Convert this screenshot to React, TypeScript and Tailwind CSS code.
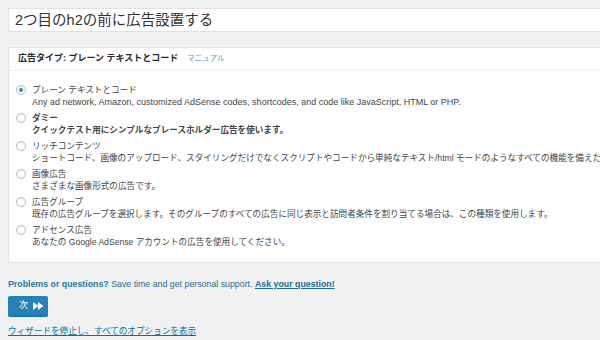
import React from "react";

const adTypes = [
  {
    label: "プレーン テキストとコード",
    desc: "Any ad network, Amazon, customized AdSense codes, shortcodes, and code like JavaScript, HTML or PHP.",
    checked: true,
    latin: true,
  },
  {
    label: "ダミー",
    desc: "クイックテスト用にシンプルなプレースホルダー広告を使います。",
    bold: true,
  },
  {
    label: "リッチコンテンツ",
    desc: "ショートコード、画像のアップロード、スタイリングだけでなくスクリプトやコードから単純なテキスト/html モードのようなすべての機能を備えたエディタ",
  },
  { label: "画像広告", desc: "さまざまな画像形式の広告です。" },
  {
    label: "広告グループ",
    desc: "既存の広告グループを選択します。そのグループのすべての広告に同じ表示と訪問者条件を割り当てる場合は、この種類を使用します。",
  },
  { label: "アドセンス広告", desc: "あなたの Google AdSense アカウントの広告を使用してください。" },
];

function Radio({ checked }: { checked?: boolean }) {
  return (
    <span className="flex items-center justify-center w-[10px] h-[10px] rounded-full border border-[#b4b9be] bg-white shadow-[inset_0_1px_1px_rgba(0,0,0,0.08)]">
      {checked && <span className="w-[4px] h-[4px] rounded-full bg-[#1e8cbe]" />}
    </span>
  );
}

function FastForward() {
  return (
    <svg width="11" height="8" viewBox="0 0 11 8" fill="white">
      <polygon points="0,0 5.5,4 0,8" />
      <polygon points="5,0 10.5,4 5,8" />
    </svg>
  );
}

export default function App() {
  return (
    <div
      className="w-[600px] h-[340px] overflow-hidden bg-[#f1f1f1] pl-[8px] pt-[8px] text-[#444]"
      style={{ fontFamily: '"Liberation Sans", "Noto Sans CJK JP", sans-serif' }}
    >
      {/* Title */}
      <div className="w-[640px] h-[24px] bg-white border border-[#e2e2e2] flex items-center pl-[6px] text-[14.5px] text-[#333] leading-none">
        2つ目のh2の前に広告設置する
      </div>

      {/* Ad type panel */}
      <div className="mt-[15px] w-[640px] bg-white border border-[#e5e5e5]">
        <div className="h-[23px] flex items-center pl-[9px] gap-[9px] border-b border-[#eee]">
          <span className="text-[9px] font-bold text-[#23282d]">広告タイプ: プレーン テキストとコード</span>
          <span className="text-[7.5px] text-[#5fa0c2]">マニュアル</span>
        </div>

        <div className="pt-[13px] pb-[14px] pl-[7px] flex flex-col gap-[4px]">
          {adTypes.map((t) => (
            <div key={t.label} className="flex flex-col">
              <div className="flex items-center h-[12px] gap-[6px]">
                <Radio checked={t.checked} />
                <span className={`text-[8.6px] text-[#444] ${t.bold ? "font-bold" : ""}`}>{t.label}</span>
              </div>
              <div
                className={`pl-[16px] h-[12px] leading-[12px] whitespace-nowrap text-[#444] ${
                  t.latin ? "text-[9px]" : "text-[8.6px]"
                } ${t.bold ? "font-bold text-[#333]" : ""}`}
              >
                {t.desc}
              </div>
            </div>
          ))}
        </div>
      </div>

      {/* Support line */}
      <p className="mt-[15px] text-[8.8px] text-[#30698a] leading-[12px]">
        <span className="font-bold text-[#2a78a4]">Problems or questions?</span> Save time and get personal
        support. <span className="font-bold underline text-[#1d6b96]">Ask your question!</span>
      </p>

      {/* Next button */}
      <button
        type="button"
        className="mt-[6px] w-[40px] h-[20px] rounded-[2px] bg-[#2581b6] flex items-center gap-[5px] pl-[11px] text-white text-[9px] shadow-[0_1px_0_#0073aa]"
      >
        次 <FastForward />
      </button>

      <a className="block mt-[9px] text-[8.6px] text-[#0073aa] underline leading-[12px]">
        ウィザードを停止し、すべてのオプションを表示
      </a>
    </div>
  );
}
